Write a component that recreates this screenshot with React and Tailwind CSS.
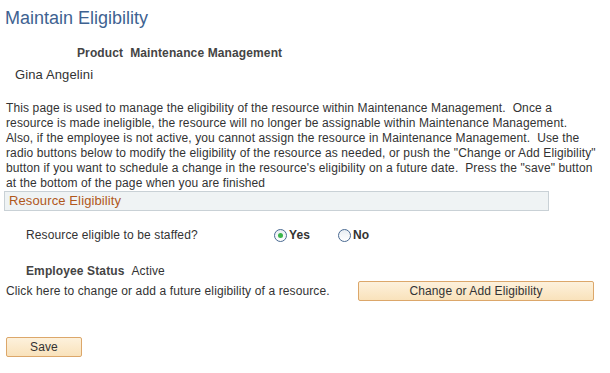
function Radio({ checked }) {
  return (
    <span className="inline-flex w-[13px] h-[13px] rounded-full border border-[#4a6a92] bg-gradient-to-b from-[#e8edf2] to-white items-center justify-center">
      {checked && <span className="w-[5px] h-[5px] rounded-full bg-[#3bb54a]" />}
    </span>
  )
}

const lines = [
  'This page is used to manage the eligibility of the resource within Maintenance Management.  Once a',
  'resource is made ineligible, the resource will no longer be assignable within Maintenance Management.',
  'Also, if the employee is not active, you cannot assign the resource in Maintenance Management.  Use the',
  'radio buttons below to modify the eligibility of the resource as needed, or push the "Change or Add Eligibility"',
  'button if you want to schedule a change in the resource\'s eligibility on a future date.  Press the "save" button',
  'at the bottom of the page when you are finished',
]

export default function App() {
  return (
    <div className="w-[610px] h-[373px] bg-white text-[#333] text-[12px] tracking-[0.12px] font-['Liberation_Sans',Arial,sans-serif] overflow-hidden">
      <h1 className="pl-[5px] pt-[6px] text-[18px] leading-[24px] tracking-normal text-[#3e6291]">Maintain Eligibility</h1>
      <div className="flex pl-[77px] pt-[16px] leading-[14px]">
        <span className="font-bold text-[#444]">Product</span>
        <span className="ml-[7px] font-bold text-[#444]">Maintenance Management</span>
      </div>
      <div className="pl-[15px] pt-[7px] text-[13px] leading-[15px]">Gina Angelini</div>
      <div className="pl-[6px] pt-[19px] leading-[15px] whitespace-pre">
        {lines.map(l => <div key={l}>{l}</div>)}
      </div>
      <div className="ml-[4px] w-[545px] h-[20px] bg-[#eff3f4] border border-[#c9d1d6] pl-[4px] text-[13px] leading-[18px] text-[#b0581c]">
        Resource Eligibility
      </div>
      <div className="flex items-center pl-[26px] pt-[12px] h-[24px] box-content">
        <span className="w-[248px]">Resource eligible to be staffed?</span>
        <label className="flex items-center gap-[2px] w-[64px]">
          <Radio checked />
          <span className="font-bold">Yes</span>
        </label>
        <label className="flex items-center gap-[2px]">
          <Radio />
          <span className="font-bold">No</span>
        </label>
      </div>
      <div className="flex pl-[26px] pt-[17px] leading-[14px]">
        <span className="font-bold text-[#444]">Employee Status</span>
        <span className="ml-[7px]">Active</span>
      </div>
      <div className="flex items-center pl-[6px] pt-[3px]">
        <span className="w-[352px]">Click here to change or add a future eligibility of a resource.</span>
        <button className="w-[236px] h-[20px] rounded-[2px] border border-[#dca76a] bg-gradient-to-b from-[#fdf1dc] to-[#f9e2bb] text-[12px] text-[#333]">
          Change or Add Eligibility
        </button>
      </div>
      <div className="pl-[6px] pt-[36px]">
        <button className="w-[76px] h-[20px] rounded-[2px] border border-[#dca76a] bg-gradient-to-b from-[#fdf1dc] to-[#f9e2bb] text-[12px] text-[#333]">
          Save
        </button>
      </div>
    </div>
  )
}
